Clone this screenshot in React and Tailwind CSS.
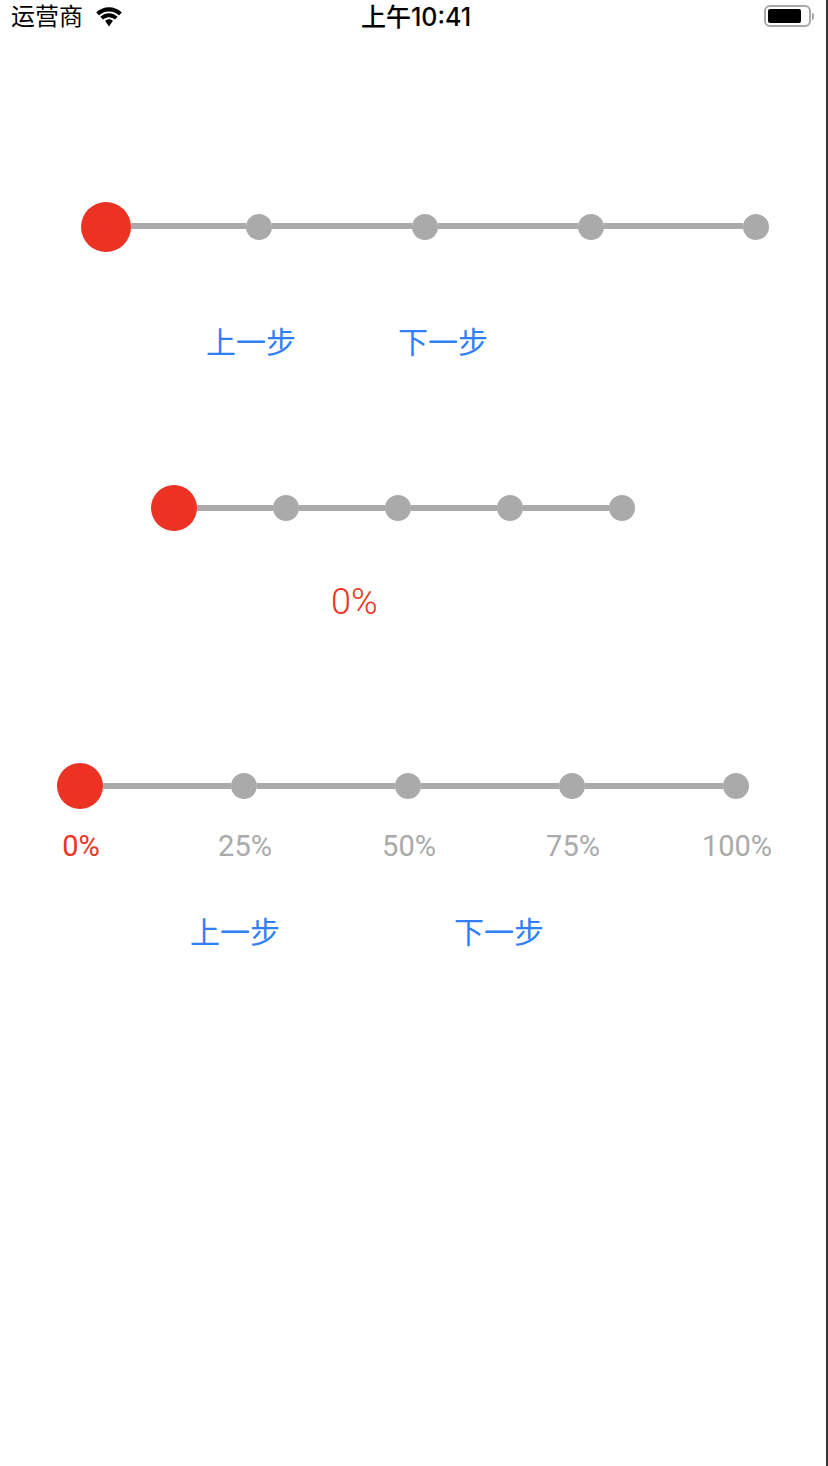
import React from 'react';

const sans = 'font-["Inter","Noto_Sans_CJK_SC",sans-serif]';

const Dot = () => <div className="h-[26px] w-[26px] shrink-0 rounded-full bg-[#aaaaaa]" />;

// big red knob followed by the grey steps
const Stepper = ({ knob, segments, className, lineClass = '' }) => (
    <div className={`flex items-center ${className}`}>
        <div className="shrink-0 rounded-full bg-[#ec3323]" style={{ width: knob, height: knob }} />
        {segments.map((w, i) => (
            <React.Fragment key={i}>
                <div className={`h-[6px] shrink-0 bg-[#aaaaaa] ${lineClass}`} style={{ width: w }} />
                <Dot />
            </React.Fragment>
        ))}
    </div>
);

const StepButton = ({ children }) => (
    <button className="w-[89px] text-center text-[30px] leading-[36px] font-normal whitespace-nowrap text-[#2f80f7]">{children}</button>
);

const StatusBar = () => (
    <div className="flex h-[40px] items-start justify-between pr-[12px] pl-[11px] text-black">
        <div className="flex w-[307px] items-center gap-[12px]">
            <span className="text-[24px] leading-[34px] font-normal">运营商</span>
            <svg width="28" height="20" viewBox="0 0 28 20" className="mb-[1px]">
                <path d="M14 4.400c3.900 0 7.400 1.500 10 4l2.800-2.900C23.500 2.200 19 .2 14 .2S4.500 2.200 1.200 5.500L4 8.400c2.600-2.500 6.100-4 10-4z" />
                <path d="M14 10.200c2.300 0 4.400.9 6 2.400l2.700-2.800C20.500 7.700 17.400 6.200 14 6.200s-6.500 1.500-8.700 3.600L8 12.600c1.600-1.500 3.700-2.400 6-2.400z" />
                <path d="M14 12.200c-1.500 0-2.800.6-3.900 1.500l3.900 5.800 3.900-5.800c-1.100-.9-2.400-1.500-3.900-1.500z" />
            </svg>
        </div>
        <span className="text-[25px] leading-[34px] font-medium">上午10:41</span>
        <div className="flex h-[32px] w-[300px] items-center justify-end">
            <div className="flex h-[22px] w-[47px] items-center rounded-[6px] border-2 border-[#a8a8a8] p-[2px]">
                <div className="h-full w-[33px] rounded-[2px] bg-black" />
            </div>
            <div className="ml-[1px] h-[7px] w-[2px] rounded-r-full bg-[#a8a8a8]" />
        </div>
    </div>
);

const labels = ['0%', '25%', '50%', '75%', '100%'];

const App = () => {
    return (
        <div className={`h-[1466px] w-[828px] overflow-hidden border-r-2 border-[#333333] bg-white ${sans}`}>
            <StatusBar />

            <Stepper knob={50} segments={[115, 140, 140, 139]} lineClass="mb-[2px]" className="mt-[162px] ml-[81px]" />
            <div className="mt-[72px] ml-[206px] flex gap-[103px]">
                <StepButton>上一步</StepButton>
                <StepButton>下一步</StepButton>
            </div>

            <Stepper knob={46} segments={[76, 86, 86, 86]} className="mt-[125px] ml-[151px]" />
            <div className='mt-[51px] ml-[331px] font-["Roboto",sans-serif] text-[36px] leading-[40px] font-light text-[#ec3323]'>0%</div>

            <Stepper knob={46} segments={[128, 138, 138, 138]} className="mt-[141px] ml-[57px]" />
            <div className="mt-[20px] ml-[-1px] flex">
                {labels.map((label, i) => (
                    <div
                        key={label}
                        className={`w-[164px] text-center font-["Roboto",sans-serif] text-[29px] leading-[34px] font-normal ${i === 0 ? 'text-[#ec3323]' : 'text-[#aaaaaa]'}`}
                    >
                        {label}
                    </div>
                ))}
            </div>
            <div className="mt-[51px] ml-[190px] flex gap-[175px]">
                <StepButton>上一步</StepButton>
                <StepButton>下一步</StepButton>
            </div>
        </div>
    );
};

export default App;
